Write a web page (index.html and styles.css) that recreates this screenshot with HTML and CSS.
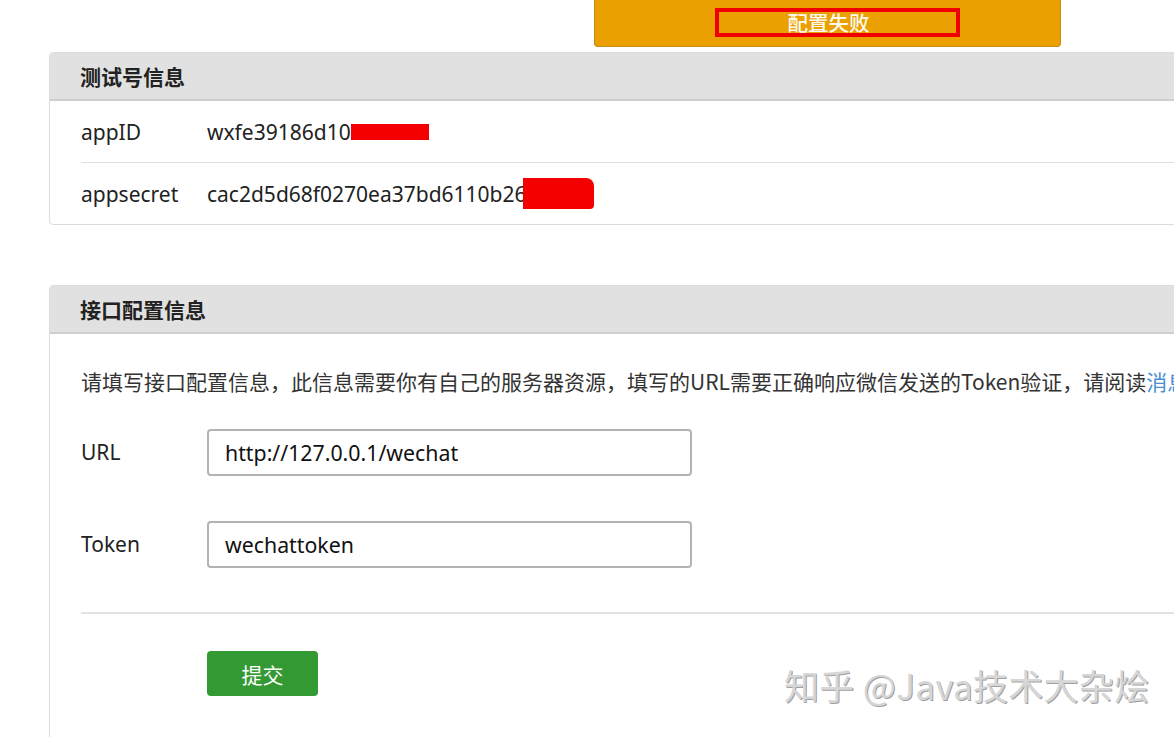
FILE: index.html
```html
<!DOCTYPE html>
<html lang="zh">
<head>
<meta charset="utf-8">
<title>接口配置</title>
<link rel="stylesheet" href="styles.css">
</head>
<body>
<div class="page">
  <div class="top">
    <div class="banner">
      <span class="banner-text">配置失败</span>
      <span class="mark-box"></span>
    </div>
  </div>

  <section class="panel panel-info">
    <div class="panel-head">测试号信息</div>
    <div class="panel-body">
      <div class="row">
        <span class="label">appID</span>
        <span class="value">wxfe39186d10<span class="redact redact-1"></span></span>
      </div>
      <div class="row">
        <span class="label">appsecret</span>
        <span class="value">cac2d5d68f0270ea37bd6110b26<span class="redact redact-2"></span></span>
      </div>
    </div>
  </section>

  <section class="panel panel-config">
    <div class="panel-head">接口配置信息</div>
    <div class="panel-body form-body">
      <p class="desc">请填写接口配置信息，此信息需要你有自己的服务器资源，填写的URL需要正确响应微信发送的Token验证，请阅读<a class="link">消息接口使用指南</a>。</p>
      <div class="field">
        <span class="flabel">URL</span>
        <div class="input">http://127.0.0.1/wechat</div>
      </div>
      <div class="field">
        <span class="flabel">Token</span>
        <div class="input">wechattoken</div>
      </div>
      <div class="divider"></div>
      <div class="actions">
        <button class="btn">提交</button>
      </div>
    </div>
    <div class="watermark">知乎 @Java技术大杂烩</div>
  </section>
</div>
</body>
</html>
```

FILE: styles.css
```css
html, body {
  margin: 0;
  padding: 0;
  background: #ffffff;
  overflow: hidden;
}
body {
  font-family: "Noto Sans", "Noto Sans CJK SC", sans-serif;
  color: #222;
  width: 1174px;
  height: 737px;
}
.page {
  padding-left: 49px;
  width: 1300px;
}
.top {
  display: flex;
  height: 52px;
}
.banner {
  position: relative;
  margin-left: 545px;
  width: 465px;
  height: 46px;
  background: #e9a000;
  border: 1px solid #c58b12;
  border-top: none;
  border-radius: 0 0 4px 4px;
  display: flex;
  justify-content: center;
  align-items: center;
}
.banner-text {
  font-family: "Noto Sans CJK SC", sans-serif;
  color: #fffaf0;
  font-size: 20.5px;
  font-weight: 500;
  margin-left: 2px;
  margin-top: -3px;
}
.mark-box {
  position: absolute;
  left: 120px;
  top: 8px;
  width: 237px;
  height: 21px;
  border: 4px solid #f00000;
}
.panel {
  position: relative;
  border: 1px solid #dcdcdc;
  border-radius: 4px;
  width: 1250px;
}
.panel-head {
  height: 46px;
  background: #e1e1e1;
  border-bottom: 2px solid #cfcfcf;
  border-radius: 4px 0 0 0;
  display: flex;
  align-items: center;
  padding-left: 30px;
  font-family: "Noto Sans CJK SC", sans-serif;
  font-weight: bold;
  font-size: 21px;
  color: #222;
}
.panel-body {
  padding-left: 31px;
}
.row {
  display: flex;
  align-items: center;
  height: 61px;
  font-size: 21px;
}
.row + .row {
  border-top: 1px solid #dedede;
}
.label {
  width: 126px;
  color: #222;
}
.value {
  display: flex;
  align-items: center;
  color: #222;
}
.redact {
  display: inline-block;
  background: #f40000;
}
.redact-1 {
  width: 78px;
  height: 16px;
  margin-left: 0;
}
.redact-2 {
  width: 71px;
  height: 31px;
  margin-left: -4px;
  border-radius: 0 8px 4px 0;
}
.panel-config {
  margin-top: 60px;
  height: 600px;
}
.form-body {
  padding-top: 30px;
}
.desc {
  margin: 0;
  font-family: "Noto Sans CJK SC", sans-serif;
  font-size: 21px;
  line-height: 34px;
  white-space: nowrap;
  color: #333;
}
.link {
  color: #4a8fd2;
}
.field {
  display: flex;
  align-items: flex-start;
  margin-top: 31px;
}
.field + .field {
  margin-top: 45px;
}
.flabel {
  width: 126px;
  font-size: 21px;
  line-height: 44px;
  margin-top: 1px;
  color: #222;
}
.input {
  box-sizing: border-box;
  width: 485px;
  height: 47px;
  border: 2px solid #b3b3b3;
  border-radius: 4px;
  padding-left: 16px;
  display: flex;
  align-items: center;
  font-size: 21.3px;
  color: #111;
}
.divider {
  height: 2px;
  background: #e2e2e2;
  margin-top: 44px;
}
.actions {
  padding-left: 126px;
  margin-top: 37px;
}
.btn {
  width: 111px;
  height: 45px;
  background: #339933;
  border: none;
  border-radius: 4px;
  color: #ffffff;
  font-family: "Noto Sans CJK SC", sans-serif;
  font-size: 21px;
  padding: 0;
}
.watermark {
  position: absolute;
  left: 734px;
  top: 373px;
  font-family: "Noto Sans CJK SC", sans-serif;
  font-size: 35px;
  color: #d6d6d6;
  text-shadow: 1px 1px 0 #a0a0a0;
  white-space: nowrap;
  letter-spacing: 0.3px;
}
```
